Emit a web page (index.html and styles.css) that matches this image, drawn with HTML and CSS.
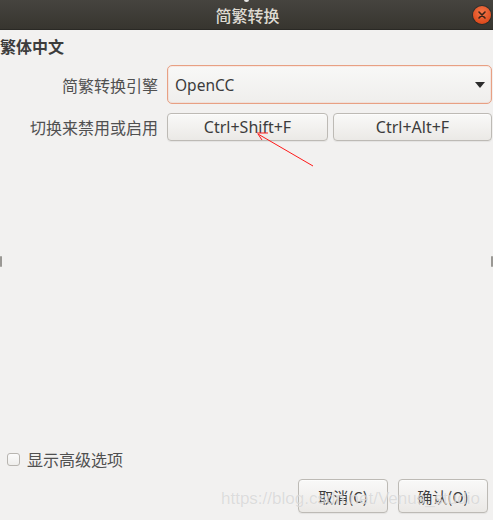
FILE: index.html
```html
<!DOCTYPE html>
<html lang="zh-CN">
<head>
<meta charset="utf-8">
<title>简繁转换</title>
<link rel="stylesheet" href="styles.css">
</head>
<body>
<div class="window">
  <div class="titlebar">
    <span class="title">简繁转换</span>
    <span class="close">
      <svg width="18" height="18" viewBox="0 0 18 18"><path d="M6 6 L12 12 M12 6 L6 12" stroke="#3a2418" stroke-width="1.6" stroke-linecap="round"/></svg>
    </span>
    <span class="topdot"></span>
  </div>
  <div class="content">
    <div class="section-title">繁体中文</div>
    <div class="form">
      <div class="label">简繁转换引擎</div>
      <div class="combo">
        <span>OpenCC</span>
        <svg class="arrow" width="10" height="6" viewBox="0 0 10 6"><path d="M0 0 H10 L5 6 Z" fill="#2c2c2c"/></svg>
      </div>
      <div class="label">切换来禁用或启用</div>
      <div class="keys">
        <button class="btn key">Ctrl+Shift+F</button>
        <button class="btn key">Ctrl+Alt+F</button>
      </div>
    </div>
    <div class="spacer"></div>
    <label class="check-row">
      <span class="checkbox"></span>
      <span class="check-label">显示高级选项</span>
    </label>
    <div class="actions">
      <button class="btn action">取消(C)</button>
      <button class="btn action">确认(O)</button>
    </div>
  </div>
  <span class="edge edge-left"></span>
  <span class="edge edge-right"></span>
  <div class="watermark">https://blog.csdn.net/Venus_studio</div>
  <svg class="annot" width="493" height="520" viewBox="0 0 493 520">
    <path d="M313 166 L258 134 M258 134 L262 140 M257 133 L268 133" stroke="#ff1a1a" stroke-width="1" fill="none"/>
  </svg>
</div>
</body>
</html>
```

FILE: styles.css
```css
* { box-sizing: border-box; }
html, body { margin: 0; padding: 0; }
body {
  width: 493px;
  height: 520px;
  overflow: hidden;
  background: #f2f1f0;
  font-family: "Noto Sans", "Noto Sans CJK SC", sans-serif;
  color: #4a4a4a;
}
.window {
  position: relative;
  width: 493px;
  height: 520px;
}
.titlebar {
  position: relative;
  height: 30px;
  background: linear-gradient(#46443f, #37352f);
  border-bottom: 1px solid #2a2925;
  display: flex;
  align-items: center;
  justify-content: center;
}
.title {
  font-family: "Noto Sans CJK SC", sans-serif;
  font-size: 16px;
  font-weight: 500;
  color: #dfdbd2;
  line-height: 18px;
  padding-left: 2px;
}
.close {
  position: absolute;
  right: 2px;
  top: 6px;
  width: 18px;
  height: 18px;
  border-radius: 50%;
  background: radial-gradient(circle at 50% 35%, #f4774a, #dd4a1c 75%);
  box-shadow: 0 0 0 1px rgba(0,0,0,0.25);
  display: flex;
}
.topdot {
  position: absolute;
  left: 244px;
  top: -2px;
  width: 5px;
  height: 4px;
  border-radius: 50%;
  background: #e8e8e8;
}
.content {
  height: 490px;
  display: flex;
  flex-direction: column;
}
.section-title {
  margin-top: 7px;
  height: 18px;
  line-height: 18px;
  font-family: "Noto Sans CJK SC", sans-serif;
  font-size: 16px;
  font-weight: 700;
  color: #3c3c3c;
}
.form {
  margin-top: 10px;
  display: grid;
  grid-template-columns: 158px 325px;
  grid-template-rows: 39px 28px;
  column-gap: 9px;
  row-gap: 9px;
}
.label {
  text-align: right;
  align-self: center;
  font-family: "Noto Sans CJK SC", sans-serif;
  font-size: 16px;
  line-height: 18px;
  color: #505050;
}
.combo {
  border: 1px solid #e8a083;
  border-radius: 5px;
  background: linear-gradient(#f8f8f7, #efeeec);
  box-shadow: inset 0 0 0 1px rgba(240,150,120,0.15);
  display: flex;
  align-items: center;
  justify-content: space-between;
  padding: 0 6px 0 7px;
  font-size: 15.5px;
  color: #3c3c3c;
}
.keys {
  display: grid;
  grid-template-columns: 161px 159px;
  column-gap: 5px;
}
.btn {
  font-family: "Noto Sans", "Noto Sans CJK SC", sans-serif;
  font-size: 16px;
  color: #3c3c3c;
  border: 1px solid #bdbab5;
  border-radius: 4px;
  background: linear-gradient(#f9f9f8, #ebe9e6);
  box-shadow: 0 1px 0 rgba(255,255,255,0.6) inset, 0 1px 1px rgba(0,0,0,0.06);
  padding: 0;
  margin: 0;
}
.key { height: 28px; }
.spacer { flex: 1; }
.check-row {
  display: flex;
  align-items: center;
  height: 20px;
  padding-left: 7px;
  gap: 7px;
}
.checkbox {
  width: 13px;
  height: 13px;
  border: 1px solid #b8b5b0;
  border-radius: 3px;
  background: linear-gradient(#fbfbfb, #efeeec);
}
.check-label {
  font-family: "Noto Sans CJK SC", sans-serif;
  font-size: 16px;
  color: #505050;
  line-height: 18px;
}
.actions {
  margin-top: 10px;
  margin-bottom: 7px;
  display: flex;
  justify-content: flex-end;
  gap: 10px;
  padding-right: 5px;
}
.action {
  width: 90px;
  height: 34px;
  font-family: "Noto Sans CJK SC", sans-serif;
  font-size: 15px;
}
.edge {
  position: absolute;
  top: 256px;
  width: 2px;
  height: 11px;
  background: #9a9894;
  border-radius: 1px;
}
.edge-left { left: 0; }
.edge-right { right: 0; }
.watermark {
  position: absolute;
  left: 221px;
  top: 489px;
  font-family: "Liberation Sans", sans-serif;
  font-size: 17px;
  color: rgba(190,190,190,0.5);
  text-shadow: 0 0 1px rgba(255,255,255,0.8);
  white-space: nowrap;
  pointer-events: none;
}
.annot {
  position: absolute;
  left: 0;
  top: 0;
  pointer-events: none;
}
```
